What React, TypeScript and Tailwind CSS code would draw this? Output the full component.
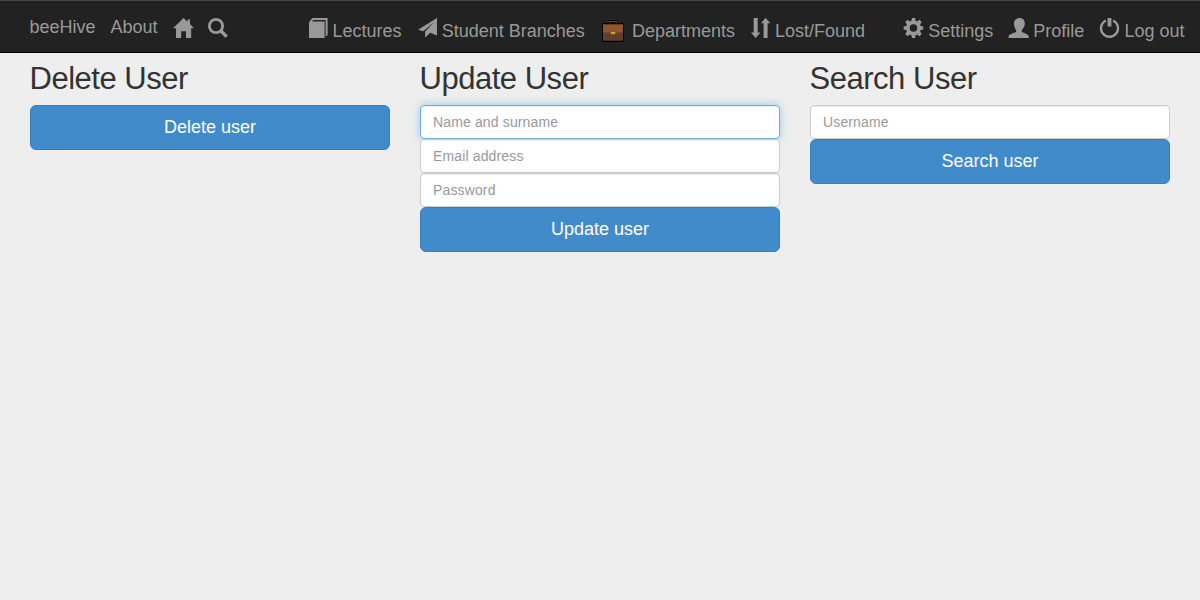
import React from "react";

function Icon({ d, evenOdd = false }: { d: string; evenOdd?: boolean }) {
  return (
    <svg width="21" height="20" viewBox="0 0 21 20" fill="currentColor" className="-mr-px shrink-0">
      <path d={d} fillRule={evenOdd ? "evenodd" : "nonzero"} />
    </svg>
  );
}

const paths = {
  home: "M10.5 0L0 10.2H3V20H8.2V13.2H13V20H18.2V10.2H21L17 6V1.5H14.5V3.8Z",
  book: "M2 4.2L5.4 0H20.6V17L18.6 18.5V2H6.4L5 3.5H17.6V20H2Z",
  plane: "M20 0V17.6L13.3 14.7L8.2 19.5L8 13.8L17.2 4L6.3 13.3L1 11.8Z",
  swap: "M3.7 0H7.7V14.6H10.4L5.7 20L0.9 14.6H3.7ZM15.6 0L20.4 5.2H17.6V20H13.6V5.2H10.9Z",
  user: "M11.5 0C8.2 0 6 2.2 6 5.3C6 8 6.7 10.5 8.2 12V13.5C8.2 14.7 1.3 15.8 0.6 18V20H20.8V18C20.1 15.8 13.8 14.7 13.8 13.5V12C15.5 10.5 16.8 8 16.8 5.3C16.8 2.2 14.8 0 11.5 0Z",
  gear: "M9 0H12L12.6 2.8L14.1 3.4L16.5 1.8L18.7 4L17.1 6.4L17.7 7.9L20.3 8.4V11.6L17.7 12.1L17.1 13.6L18.7 16L16.5 18.2L14.1 16.6L12.6 17.2L12 20H9L8.4 17.2L6.9 16.6L4.5 18.2L2.3 16L3.9 13.6L3.3 12.1L0.7 11.6V8.4L3.3 7.9L3.9 6.4L2.3 4L4.5 1.8L6.9 3.4L8.4 2.8ZM10.5 6.2A3.8 3.8 0 1 0 10.5 13.8A3.8 3.8 0 1 0 10.5 6.2Z",
};

function Search() {
  return (
    <svg width="21" height="20" viewBox="0 0 21 20" fill="none" stroke="currentColor" strokeWidth="2.8">
      <circle cx="8" cy="8" r="6.6" />
      <path d="M12.8 12.8L18.7 18.7" strokeWidth="3.4" />
    </svg>
  );
}

function Power() {
  return (
    <svg width="21" height="20" viewBox="0 0 21 20" fill="none" stroke="currentColor" className="-mr-px shrink-0">
      <path d="M6.9 2.5A8.5 8.5 0 1 0 14.1 2.5" strokeWidth="2.4" />
      <path d="M10.5 0V8.5" strokeWidth="3.8" />
    </svg>
  );
}

function Briefcase() {
  return (
    <svg width="22" height="22" viewBox="0 0 22 22" className="ml-0.5 mt-0.5 shrink-0">
      <path d="M7.5 5V1.7H14.5V5" fill="none" stroke="#000" strokeWidth="3" strokeLinejoin="round" />
      <path d="M7.5 5V1.7H14.5V5" fill="none" stroke="#6b3d2c" strokeWidth="1.2" />
      <rect x="0" y="3" width="22" height="19" rx="1.5" fill="#000" />
      <path d="M1 4.3H21V13H1Z" fill="#8f552d" />
      <path d="M1 12.5H21V20.8H1Z" fill="#643c2d" />
      <rect x="8.8" y="12" width="4.4" height="2.2" fill="#d6a010" />
    </svg>
  );
}

function NavLink({ icon, label, className }: { icon: React.ReactNode; label: string; className: string }) {
  return (
    <a className={`flex shrink-0 items-start whitespace-nowrap ${className}`}>
      {icon}
      <span className="ml-auto pt-[3px] leading-5">{label}</span>
    </a>
  );
}

function Field({ placeholder, focused = false }: { placeholder: string; focused?: boolean }) {
  return (
    <input
      placeholder={placeholder}
      className={`block h-[34px] w-full rounded border bg-white px-3 py-1.5 text-sm tracking-[0.14px] placeholder:text-[#999] outline-none ${
        focused
          ? "border-[#66afe9] shadow-[inset_0_1px_1px_rgba(0,0,0,.075),0_0_8px_rgba(102,175,233,.6)]"
          : "border-[#ccc] shadow-[inset_0_1px_1px_rgba(0,0,0,.075)]"
      }`}
    />
  );
}

function Submit({ label }: { label: string }) {
  return (
    <button className="block h-[45px] w-full rounded-md border border-[#357ebd] bg-[#428bca] pb-0.5 text-lg leading-6 text-white">
      {label}
    </button>
  );
}

function Panel({ title, children }: { title: string; children: React.ReactNode }) {
  return (
    <section>
      <h2 className="-ml-[0.5px] mb-[9px] text-[31px] leading-[35px] tracking-[-0.48px] text-[#333]">{title}</h2>
      {children}
    </section>
  );
}

export default function App() {
  return (
    <div className="min-h-screen bg-[#eee] font-['Liberation_Sans',Arial,sans-serif]">
      <nav className="flex h-[53px] items-start border-t border-b border-t-[#484848] border-b-black bg-[#222] pt-[17px] text-lg leading-5 text-[#999]">
        <div className="flex w-[307px] shrink-0 items-start pl-[29.5px]">
          <a className="w-[81px] -mt-px">beeHive</a>
          <a className="w-[62px] -mt-px">About</a>
          <a className="w-[35px]"><Icon d={paths.home} /></a>
          <a><Search /></a>
        </div>
        <NavLink icon={<Icon d={paths.book} />} label="Lectures" className="w-[94.5px]" />
        <NavLink icon={<Icon d={paths.plane} />} label="Student Branches" className="ml-[15.3px] w-[168px]" />
        <NavLink icon={<Briefcase />} label="Departments" className="ml-[15.2px] w-[135px]" />
        <NavLink icon={<Icon d={paths.swap} />} label="Lost/Found" className="ml-[15px] w-[115px]" />
        <NavLink icon={<Icon d={paths.gear} evenOdd />} label="Settings" className="ml-[38px] w-[90.3px]" />
        <NavLink icon={<Icon d={paths.user} />} label="Profile" className="ml-[15px] w-[76px]" />
        <NavLink icon={<Power />} label="Log out" className="ml-[15px] w-[85.2px]" />
      </nav>
      <main className="grid grid-cols-3 gap-[30px] px-[30px] pt-2">
        <Panel title="Delete User">
          <Submit label="Delete user" />
        </Panel>
        <Panel title="Update User">
          <Field placeholder="Name and surname" focused />
          <Field placeholder="Email address" />
          <Field placeholder="Password" />
          <Submit label="Update user" />
        </Panel>
        <Panel title="Search User">
          <Field placeholder="Username" />
          <Submit label="Search user" />
        </Panel>
      </main>
    </div>
  );
}
